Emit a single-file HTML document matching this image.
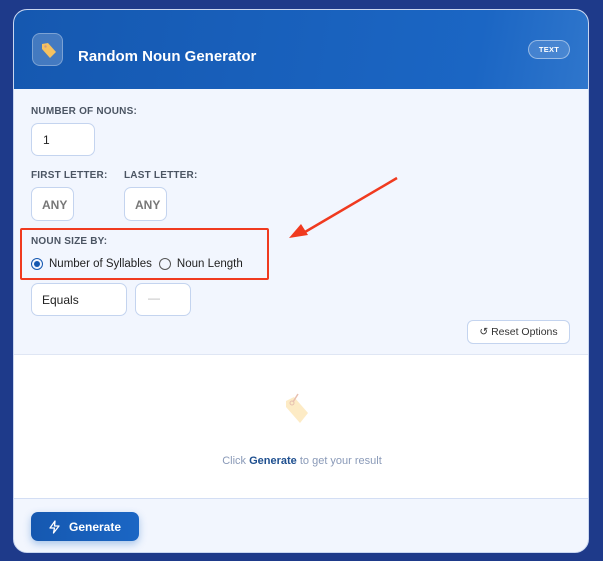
<!DOCTYPE html>
<html><head><style>
*{box-sizing:border-box;margin:0;padding:0}
body{width:603px;height:561px;background:#1e3a8a;font-family:"Liberation Sans",sans-serif;position:relative;overflow:hidden}
.card{position:absolute;left:13px;top:9px;width:576px;height:544px;border-radius:14px;background:#f2f6fe;overflow:hidden;border:1px solid #c9d6f0}
.hdr{position:absolute;left:0;top:0;width:576px;height:79px;background:linear-gradient(100deg,#1558b0,#1b66c4 80%,#2f76cc)}
.ico{position:absolute;left:18px;top:23px;width:31px;height:33px;border-radius:8px;background:rgba(255,255,255,.2);border:1px solid rgba(255,255,255,.3)}
.title{position:absolute;left:64px;top:38px;color:#fff;font-weight:bold;font-size:15px}
.badge{position:absolute;left:514px;top:30px;width:42px;height:19px;border-radius:10px;border:1px solid rgba(255,255,255,.45);background:rgba(255,255,255,.15);color:#fff;font-size:7.5px;font-weight:bold;text-align:center;line-height:17px;letter-spacing:.3px}
.lbl{position:absolute;font-size:10px;color:#4b5563;font-weight:bold;letter-spacing:.2px}
.inp{position:absolute;background:#fff;border:1px solid #c4d4ef;border-radius:7px;font-size:12px;color:#222}
.res{position:absolute;left:0;top:344px;width:576px;height:145px;background:#fff;border-top:1px solid #dfe6f4;border-bottom:1px solid #d3def4}
.btn{position:absolute;left:17px;top:502px;width:108px;height:29px;border-radius:7px;background:linear-gradient(90deg,#1558b0,#1b66c4);color:#fff;font-weight:bold;font-size:12px;box-shadow:0 3px 8px rgba(27,102,196,.35)}
</style></head><body>
<div class="card">
 <div class="hdr">
  <div class="ico"><svg width="31" height="33" viewBox="0 0 31 33"><path d="M9 10 L15 9 L23 18 L17 24 L9 15Z" fill="#f6c260"/><circle cx="12.5" cy="12.5" r="1.2" fill="#c98"/></svg></div>
  <div class="title">Random Noun Generator</div>
  <div class="badge">TEXT</div>
 </div>
 <div class="lbl" style="left:17px;top:96px">NUMBER OF NOUNS:</div>
 <div class="inp" style="left:17px;top:113px;width:64px;height:33px;padding:9px 0 0 11px">1</div>
 <div class="lbl" style="left:17px;top:160px">FIRST LETTER:</div>
 <div class="lbl" style="left:110px;top:160px">LAST LETTER:</div>
 <div class="inp" style="left:17px;top:177px;width:43px;height:34px;padding:10px 0 0 10px;color:#777;font-weight:bold;overflow:hidden;white-space:nowrap">ANY</div>
 <div class="inp" style="left:110px;top:177px;width:43px;height:34px;padding:10px 0 0 10px;color:#777;font-weight:bold;overflow:hidden;white-space:nowrap">ANY</div>
 <div style="position:absolute;left:6px;top:218px;width:249px;height:52px;border:2px solid #f03a1f;border-radius:2px"></div>
 <div class="lbl" style="left:17px;top:226px">NOUN SIZE BY:</div>
 <div style="position:absolute;left:17px;top:248px;font-size:11.5px;color:#222;display:flex;align-items:center">
  <span style="width:12px;height:12px;border-radius:50%;border:1.5px solid #1558b0;display:inline-flex;align-items:center;justify-content:center;margin-right:6px"><span style="width:6px;height:6px;border-radius:50%;background:#1558b0"></span></span>Number of Syllables
  <span style="width:12px;height:12px;border-radius:50%;border:1px solid #555;display:inline-block;margin:0 6px 0 7px"></span>Noun Length
 </div>
 <div class="inp" style="left:17px;top:273px;width:96px;height:33px;padding:9px 0 0 10px">Equals</div>
 <div class="inp" style="left:121px;top:273px;width:56px;height:33px;padding:7px 0 0 12px;color:#bbb">—</div>
 <div class="inp" style="left:453px;top:310px;width:103px;height:24px;font-size:10.5px;color:#333;text-align:center;line-height:22px;border-radius:6px">↺ Reset Options</div>
 <div class="res">
  <svg style="position:absolute;left:268px;top:36px" width="36" height="40" viewBox="0 0 36 40"><path d="M4 10 L12 6 L26 22 L18 32 L4 16Z" fill="#fdebc5"/><circle cx="10" cy="12" r="2" fill="none" stroke="#e6c0b0"/><path d="M11 11 L16 3" stroke="#e8c0b0" stroke-width="1.5"/></svg>
  <div style="position:absolute;left:0;width:576px;top:100px;text-align:center;font-size:11px;color:#8a9ab8">Click <b style="color:#1e4f8f">Generate</b> to get your result</div>
 </div>
 <div class="btn"><svg style="position:absolute;left:17px;top:8px" width="13" height="14" viewBox="0 0 13 14"><path d="M7 1 L2 8 H6.5 L5.5 13 L11 6 H6.5Z" fill="none" stroke="#fff" stroke-width="1.3" stroke-linejoin="round"/></svg><span style="position:absolute;left:38px;top:8px">Generate</span></div>
</div>
<svg style="position:absolute;left:0;top:0" width="603" height="561"><line x1="397" y1="178" x2="305" y2="232" stroke="#f03a1f" stroke-width="2.5"/><path d="M289 238 L301 224 L308 235Z" fill="#f03a1f"/></svg>
</body></html>
